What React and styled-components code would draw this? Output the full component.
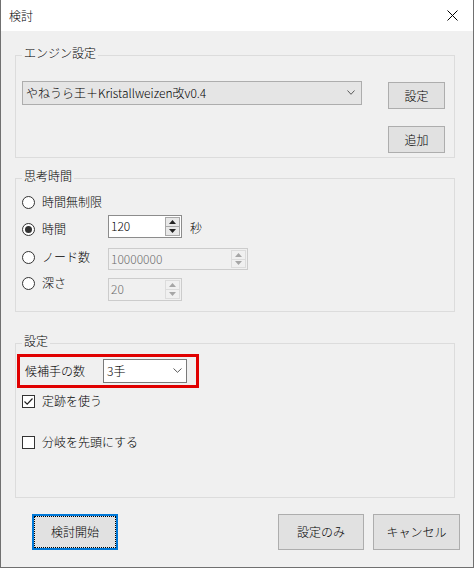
import React from "react";
import styled, { createGlobalStyle, css } from "styled-components";

const font = `"Noto Sans CJK JP", "Noto Sans", sans-serif`;

const GlobalStyle = createGlobalStyle`
	html, body {
		margin: 0;
		padding: 0;
		background: #f0f0f0;
	}
	body {
		font-family: ${font};
		font-size: 12px;
		font-weight: 300;
		color: #000;
	}
`;

const Window = styled.div`
	width: 474px;
	height: 568px;
	box-sizing: border-box;
	border: 1px solid #707070;
	border-top: none;
	display: flex;
	flex-direction: column;
	background: #f0f0f0;
	overflow: hidden;
`;

const TitleBar = styled.div`
	height: 31px;
	flex: none;
	background: #fff;
	display: flex;
	align-items: center;
	justify-content: space-between;
	padding: 0 15px 0 8px;
	box-sizing: border-box;
	line-height: 16px;
`;

const CloseIcon = () => (
	<svg width="11" height="11" viewBox="0 0 11 11" style={{ marginTop: -1 }}>
		<path d="M0.5 0.5 L10.5 10.5 M10.5 0.5 L0.5 10.5" stroke="#000" strokeWidth="1" />
	</svg>
);

const GroupBox = styled.div`
	position: relative;
	box-sizing: border-box;
	margin: ${p => p.$mt}px 0 0 14px;
	width: 440px;
	height: ${p => p.$h}px;
	flex: none;
	border: 1px solid #dcdcdc;
	padding: ${p => p.$pad};
	display: flex;
	flex-direction: ${p => p.$dir || "column"};
	align-items: flex-start;
`;

/* caption sits on top of the group's border line */
const GroupTitle = styled.span`
	position: absolute;
	top: -11px;
	left: 6px;
	padding: 0 2px;
	line-height: 16px;
	background: #f0f0f0;
`;

const Chevron = ({ w = 8 }) => (
	<svg width={w} height="5" viewBox={`0 0 ${w} 5`}>
		<path d={`M0.5 0.5 L${w / 2} 4.3 L${w - 0.5} 0.5`} fill="none" stroke="#5a5a5a" strokeWidth="1" />
	</svg>
);

const Combo = styled.div`
	box-sizing: border-box;
	width: ${p => p.$w}px;
	height: 24px;
	flex: none;
	display: flex;
	align-items: center;
	justify-content: space-between;
	padding: 0 ${p => p.$pr}px 1px 3px;
	line-height: 16px;
	${p =>
		p.$white
			? css`
					background: #fff;
					border: 1px solid #7a7a7a;
			  `
			: css`
					background: #e5e5e5;
					border: 1px solid #adadad;
			  `}
`;

const Button = styled.button`
	box-sizing: border-box;
	width: ${p => p.$w}px;
	height: ${p => p.$h}px;
	flex: none;
	margin: 0;
	padding: 0 0 1px;
	font-family: ${font};
	font-size: 12px;
	font-weight: 300;
	color: #000;
	background: #e1e1e1;
	border: 1px solid #adadad;
	${p =>
		p.$default &&
		css`
			border: 2px solid #0078d7;
			outline: 1px dotted #000;
			outline-offset: -3px;
		`}
`;

const ButtonColumn = styled.div`
	display: flex;
	flex-direction: column;
	gap: 17px;
	margin: 1px 0 0 26px;
`;

const Row = styled.div`
	display: flex;
	align-items: flex-start;
	margin-top: ${p => p.$mt || 0}px;
`;

const Option = styled.label`
	display: flex;
	align-items: center;
	gap: 7px;
	width: ${p => (p.$w ? `${p.$w}px` : "auto")};
	height: 16px;
	line-height: 16px;
	margin-top: ${p => p.$dy || 0}px;
	margin-left: ${p => p.$ml || 0}px;
	flex: none;
`;

const RadioCircle = styled.span`
	box-sizing: border-box;
	width: 13px;
	height: 13px;
	border-radius: 50%;
	border: 1px solid #333;
	background: #fff;
	display: flex;
	align-items: center;
	justify-content: center;
	flex: none;

	&::after {
		content: "";
		display: ${p => (p.$on ? "block" : "none")};
		width: 7px;
		height: 7px;
		border-radius: 50%;
		background: #333;
	}
`;

const CheckSquare = styled.span`
	box-sizing: border-box;
	width: 13px;
	height: 13px;
	border: 1px solid #333;
	background: #fff;
	display: flex;
	align-items: center;
	justify-content: center;
	flex: none;
`;

const Spinner = styled.div`
	box-sizing: border-box;
	width: ${p => p.$w}px;
	height: ${p => p.$h}px;
	margin-top: ${p => p.$dy || 0}px;
	flex: none;
	display: flex;
	align-items: stretch;
	padding: 1px;
	border: 1px solid ${p => (p.$disabled ? "#cccccc" : "#8c8c8c")};
	background: ${p => (p.$disabled ? "#f0f0f0" : "#fff")};
	color: ${p => (p.$disabled ? "#6d6d6d" : "#000")};
`;

const SpinValue = styled.span`
	flex: 1;
	line-height: 16px;
	padding: 1px 0 0 1px;
`;

const SpinButtons = styled.div`
	width: 15px;
	display: flex;
	flex-direction: column;
`;

const SpinPart = styled.span`
	flex: 1;
	box-sizing: border-box;
	display: flex;
	align-items: center;
	justify-content: center;
	border: 1px solid ${p => (p.$disabled ? "#dcdcdc" : "#a8a8a8")};
	background: ${p => (p.$disabled ? "#f0f0f0" : "#e8e8e8")};
	& + & {
		border-top: none;
	}
`;

const Arrow = ({ up, color }) => (
	<svg width="7" height="4" viewBox="0 0 7 4">
		<path d={up ? "M0 4 L3.5 0 L7 4 Z" : "M0 0 L3.5 4 L7 0 Z"} fill={color} />
	</svg>
);

const NumberBox = ({ value, w, h, dy, disabled }) => {
	const color = disabled ? "#a6a6a6" : "#222";
	return (
		<Spinner $w={w} $h={h} $dy={dy} $disabled={disabled}>
			<SpinValue>{value}</SpinValue>
			<SpinButtons>
				<SpinPart $disabled={disabled}>
					<Arrow up color={color} />
				</SpinPart>
				<SpinPart $disabled={disabled}>
					<Arrow color={color} />
				</SpinPart>
			</SpinButtons>
		</Spinner>
	);
};

const Unit = styled.span`
	line-height: 16px;
	margin: 5px 0 0 8px;
`;

const Highlight = styled.div`
	box-sizing: border-box;
	width: 182px;
	height: 34px;
	margin-left: 1px;
	border: 3px solid #e00000;
	display: flex;
	align-items: center;
	padding-left: 5px;
`;

const FieldLabel = styled.span`
	width: 78px;
	flex: none;
	line-height: 16px;
`;

const Footer = styled.div`
	display: flex;
	justify-content: space-between;
	margin-top: 16px;
	padding: 0 13px 0 31px;
`;

const FooterRight = styled.div`
	display: flex;
	gap: 9px;
`;

const Radio = ({ on, children, ...rest }) => (
	<Option {...rest}>
		<RadioCircle $on={on} />
		{children}
	</Option>
);

const Check = ({ on, children, ...rest }) => (
	<Option {...rest}>
		<CheckSquare>
			{on && (
				<svg width="11" height="11" viewBox="0 0 11 11">
					<path d="M1.5 5.5 L4.2 8.2 L9.5 2.5" fill="none" stroke="#222" strokeWidth="1.2" />
				</svg>
			)}
		</CheckSquare>
		{children}
	</Option>
);

export default function App() {
	return (
		<>
			<GlobalStyle />
			<Window>
				<TitleBar>
					<span>検討</span>
					<CloseIcon />
				</TitleBar>

				<GroupBox $mt={24} $h={103} $pad="25px 9px 0 6px" $dir="row">
					<GroupTitle>エンジン設定</GroupTitle>
					<Combo $w={340} $pr={6}>
						<span>やねうら王＋Kristallweizen改v0.4</span>
						<Chevron w={8} />
					</Combo>
					<ButtonColumn>
						<Button $w={57} $h={27}>設定</Button>
						<Button $w={57} $h={27}>追加</Button>
					</ButtonColumn>
				</GroupBox>

				<GroupBox $mt={20} $h={134} $pad="15px 0 0 6px">
					<GroupTitle>思考時間</GroupTitle>
					<Row>
						<Radio>時間無制限</Radio>
					</Row>
					<Row $mt={5}>
						<Radio on $w={86} $dy={6}>時間</Radio>
						<NumberBox value="120" w={74} h={23} />
						<Unit>秒</Unit>
					</Row>
					<Row $mt={10}>
						<Radio $w={86} $dy={1}>ノード数</Radio>
						<NumberBox value="10000000" w={140} h={22} disabled />
					</Row>
					<Row $mt={5}>
						<Radio $w={86}>深さ</Radio>
						<NumberBox value="20" w={74} h={23} dy={3} disabled />
					</Row>
				</GroupBox>

				<GroupBox $mt={31} $h={155} $pad="10px 0 0 0">
					<GroupTitle>設定</GroupTitle>
					<Highlight>
						<FieldLabel>候補手の数</FieldLabel>
						<Combo $w={84} $pr={4} $white>
							<span>3手</span>
							<Chevron w={9} />
						</Combo>
					</Highlight>
					<Row $mt={5}>
						<Check on $ml={6}>定跡を使う</Check>
					</Row>
					<Row $mt={25}>
						<Check $ml={6}>分岐を先頭にする</Check>
					</Row>
				</GroupBox>

				<Footer>
					<Button $w={86} $h={36} $default>検討開始</Button>
					<FooterRight>
						<Button $w={86} $h={36}>設定のみ</Button>
						<Button $w={87} $h={36}>キャンセル</Button>
					</FooterRight>
				</Footer>
			</Window>
		</>
	);
}
